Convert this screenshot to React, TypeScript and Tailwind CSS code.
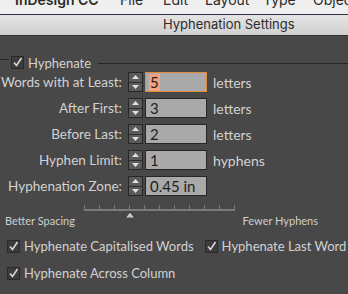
import React from 'react';

const font = { fontFamily: 'Lato, "Liberation Sans", sans-serif' };

const Check = () => (
  <span className="flex h-[13px] w-[13px] shrink-0 items-center justify-center border border-[#2a2a2a] bg-[#3c3c3c]">
    <svg width="11" height="11" viewBox="0 0 11 11">
      <path d="M2 5.5 L4.5 8.5 L9.5 1" fill="none" stroke="#d8d8d8" strokeWidth="1.6" />
    </svg>
  </span>
);

const Spinner = () => (
  <div className="flex h-[20px] w-[15px] flex-col border border-[#262626] bg-[#5a5a5a]">
    <div className="flex flex-1 items-center justify-center border-b border-[#2e2e2e]">
      <svg width="7" height="4" viewBox="0 0 7 4">
        <path d="M0 4 L3.5 0 L7 4 Z" fill="#e0e0e0" />
      </svg>
    </div>
    <div className="flex flex-1 items-center justify-center">
      <svg width="7" height="4" viewBox="0 0 7 4">
        <path d="M0 0 L3.5 4 L7 0 Z" fill="#e0e0e0" />
      </svg>
    </div>
  </div>
);

type RowProps = { label: string; value: string; unit?: string; active?: boolean };

const Row = ({ label, value, unit, active }: RowProps) => (
  <div className="flex h-[20px] items-center">
    <span className="w-[123px] shrink-0 whitespace-nowrap pr-[1px] text-right text-[13.5px] text-[#d2d2d2]">{label}</span>
    <div className="ml-[5px]">
      <Spinner />
    </div>
    <div
      className={
        active
          ? 'ml-[2px] flex h-[20px] w-[62px] items-center border border-[#e08a3c] bg-[#a9a9a9] pl-[3px]'
          : 'ml-[2px] flex h-[20px] w-[62px] items-center border border-[#262626] bg-[#a9a9a9] pl-[3px]'
      }
    >
      <span
        className={
          active
            ? 'whitespace-nowrap bg-[#f3a27f] px-[1px] text-[15px] leading-[17px] text-[#1e1e1e]'
            : 'whitespace-nowrap px-[1px] text-[15px] leading-[17px] text-[#1e1e1e]'
        }
      >
        {value}
      </span>
    </div>
    {unit && <span className="ml-[6px] text-[14px] text-[#d2d2d2]">{unit}</span>}
  </div>
);

export default function App() {
  const ticks = Array.from({ length: 11 });
  return (
    <div className="flex h-[294px] w-[348px] flex-col overflow-hidden bg-[#484848]" style={font}>
      <div className="flex h-[15px] shrink-0 items-end overflow-hidden border-b border-[#2b3442] bg-[#efefef]">
        <div
          className="flex shrink-0 items-center whitespace-nowrap pl-[15px] text-[14px] leading-[18px] text-[#2a2a2a]"
          style={{ fontFamily: 'Inter, "Liberation Sans", sans-serif', marginBottom: '5px' }}
        >
          <span className="w-[105px] font-semibold">InDesign CC</span>
          <span className="w-[43px]">File</span>
          <span className="w-[42px]">Edit</span>
          <span className="w-[58px]">Layout</span>
          <span className="w-[50px]">Type</span>
          <span>Object</span>
        </div>
      </div>
      <div
        className="flex h-[21px] shrink-0 items-center whitespace-nowrap border-b border-[#2f2f2f] bg-gradient-to-b from-[#e4e4e4] to-[#d0d0d0] pl-[163px] text-[13px] text-[#2c2c2c]"
        style={{ fontFamily: 'Inter, "Liberation Sans", sans-serif' }}
      >
        Hyphenation Settings
      </div>

      <div className="mt-[20px] flex h-[13px] items-start">
        <div className="mt-[3px] h-[1px] w-[9px] bg-[#262626]" />
        <div className="ml-[2px]">
          <Check />
        </div>
        <span className="ml-[4px] whitespace-nowrap text-[13px] leading-[14px] text-[#d2d2d2]">Hyphenate</span>
        <div className="ml-[7px] mt-[7px] h-[1px] flex-1 bg-[#262626]" />
      </div>

      <div className="mt-[3px] flex flex-col gap-[6px]">
        <Row label="Words with at Least:" value="5" unit="letters" active />
        <Row label="After First:" value="3" unit="letters" />
        <Row label="Before Last:" value="2" unit="letters" />
        <Row label="Hyphen Limit:" value="1" unit="hyphens" />
        <Row label="Hyphenation Zone:" value="0.45 in" />
      </div>

      <div className="mt-[11px] flex">
        <div className="ml-[84px] flex flex-col">
          <div className="flex h-[4px] w-[151px] items-end border-b-2 border-[#7a7a7a]">
            {ticks.map((_, i) => (
              <div key={i} className="h-[4px] w-[1px] bg-[#7a7a7a]" style={{ marginLeft: i === 0 ? 0 : 14 }} />
            ))}
          </div>
          <svg className="ml-[41px] mt-[1px]" width="10" height="6" viewBox="0 0 10 6">
            <path d="M0 6 L5 0 L10 6 Z" fill="#c8c8c8" stroke="#222" strokeWidth="0.8" />
          </svg>
        </div>
      </div>
      <div className="-mt-[3px] flex justify-between whitespace-nowrap pl-[5px] pr-[30px] text-[11px] leading-[12px] text-[#cfcfcf]">
        <span>Better Spacing</span>
        <span>Fewer Hyphens</span>
      </div>

      <div className="mt-[13px] flex flex-col gap-[14px] whitespace-nowrap pl-[7px] text-[13px] leading-[13px] text-[#d2d2d2]">
        <div className="flex items-center">
          <Check />
          <span className="ml-[4px]">Hyphenate Capitalised Words</span>
          <div className="ml-[11px]">
            <Check />
          </div>
          <span className="ml-[4px]">Hyphenate Last Word</span>
        </div>
        <div className="flex items-center">
          <Check />
          <span className="ml-[4px]">Hyphenate Across Column</span>
        </div>
      </div>
    </div>
  );
}
